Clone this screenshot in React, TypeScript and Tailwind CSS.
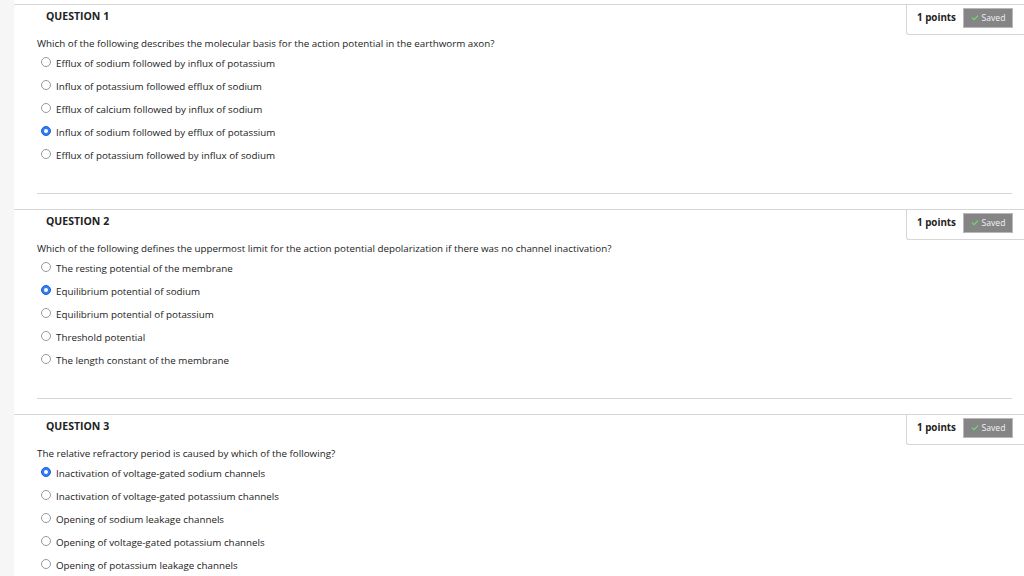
import { Check } from "lucide-react";

interface Question {
  num: number;
  text: string;
  options: string[];
  selected: number;
}

const questions: Question[] = [
  {
    num: 1,
    text: "Which of the following describes the molecular basis for the action potential in the earthworm axon?",
    options: [
      "Efflux of sodium followed by influx of potassium",
      "Influx of potassium followed efflux of sodium",
      "Efflux of calcium followed by influx of sodium",
      "Influx of sodium followed by efflux of potassium",
      "Efflux of potassium followed by influx of sodium",
    ],
    selected: 3,
  },
  {
    num: 2,
    text: "Which of the following defines the uppermost limit for the action potential depolarization if there was no channel inactivation?",
    options: [
      "The resting potential of the membrane",
      "Equilibrium potential of sodium",
      "Equilibrium potential of potassium",
      "Threshold potential",
      "The length constant of the membrane",
    ],
    selected: 1,
  },
  {
    num: 3,
    text: "The relative refractory period is caused by which of the following?",
    options: [
      "Inactivation of voltage-gated sodium channels",
      "Inactivation of voltage-gated potassium channels",
      "Opening of sodium leakage channels",
      "Opening of voltage-gated potassium channels",
      "Opening of potassium leakage channels",
    ],
    selected: 0,
  },
];

const Radio = ({ checked }: { checked: boolean }) =>
  checked ? (
    <span className="block w-[10px] h-[10px] rounded-full bg-[#2f7cf6] border border-[#1d63d8] flex items-center justify-center shrink-0">
      <span className="block w-[4px] h-[4px] rounded-full bg-white" />
    </span>
  ) : (
    <span className="block w-[10px] h-[10px] rounded-full border border-[#999] bg-white shrink-0" />
  );

const QuestionBlock = ({ q }: { q: Question }) => (
  <div className="border-t border-[#d6d6d6] mb-[15px]">
    {/* Header */}
    <div className="flex justify-between h-[31px]">
      <div className="pl-[32px] pt-[3px] text-[10.5px] font-bold text-[#222] leading-[16px]">
        QUESTION {q.num}
      </div>
      <div className="w-[118px] h-[31px] border-l border-b border-[#d6d6d6] rounded-bl-[3px] flex items-center pl-[10px] pb-[2px] gap-[7px] -mt-px">
        <span className="text-[9.8px] font-bold text-[#222]">1 points</span>
        <span className="w-[50px] h-[20px] bg-[#858585] border border-[#b8b8b8] flex items-center justify-center gap-[3px] text-[8.6px] text-[#f2f2f2]">
          <Check className="w-[8px] h-[8px] text-[#6ed36e]" strokeWidth={4} />
          Saved
        </span>
      </div>
    </div>

    {/* Prompt */}
    <div className="pl-[23px] text-[9.8px] text-[#222] leading-[16px]">{q.text}</div>

    {/* Options */}
    <div className="pl-[27px] pt-[1px] flex flex-col">
      {q.options.map((opt, i) => (
        <div key={i} className="h-[23px] flex items-center gap-[5px]">
          <span className="block -mt-[5px]">
            <Radio checked={i === q.selected} />
          </span>
          <span className="text-[9.8px] text-[#222]">{opt}</span>
        </div>
      ))}
    </div>

    <div className="ml-[23px] mr-[12px] mt-[25px] border-t border-[#d6d6d6]" />
  </div>
);

const App = () => {
  return (
    <div
      className="w-[1024px] h-[576px] overflow-hidden flex bg-white"
      style={{ fontFamily: '"Open Sans", "Liberation Sans", sans-serif' }}
    >
      <div className="w-[14px] bg-[#f6f6f6] shrink-0" />
      <div className="flex-1 pt-[4px]">
        {questions.map((q) => (
          <QuestionBlock key={q.num} q={q} />
        ))}
      </div>
    </div>
  );
};

export default App;
